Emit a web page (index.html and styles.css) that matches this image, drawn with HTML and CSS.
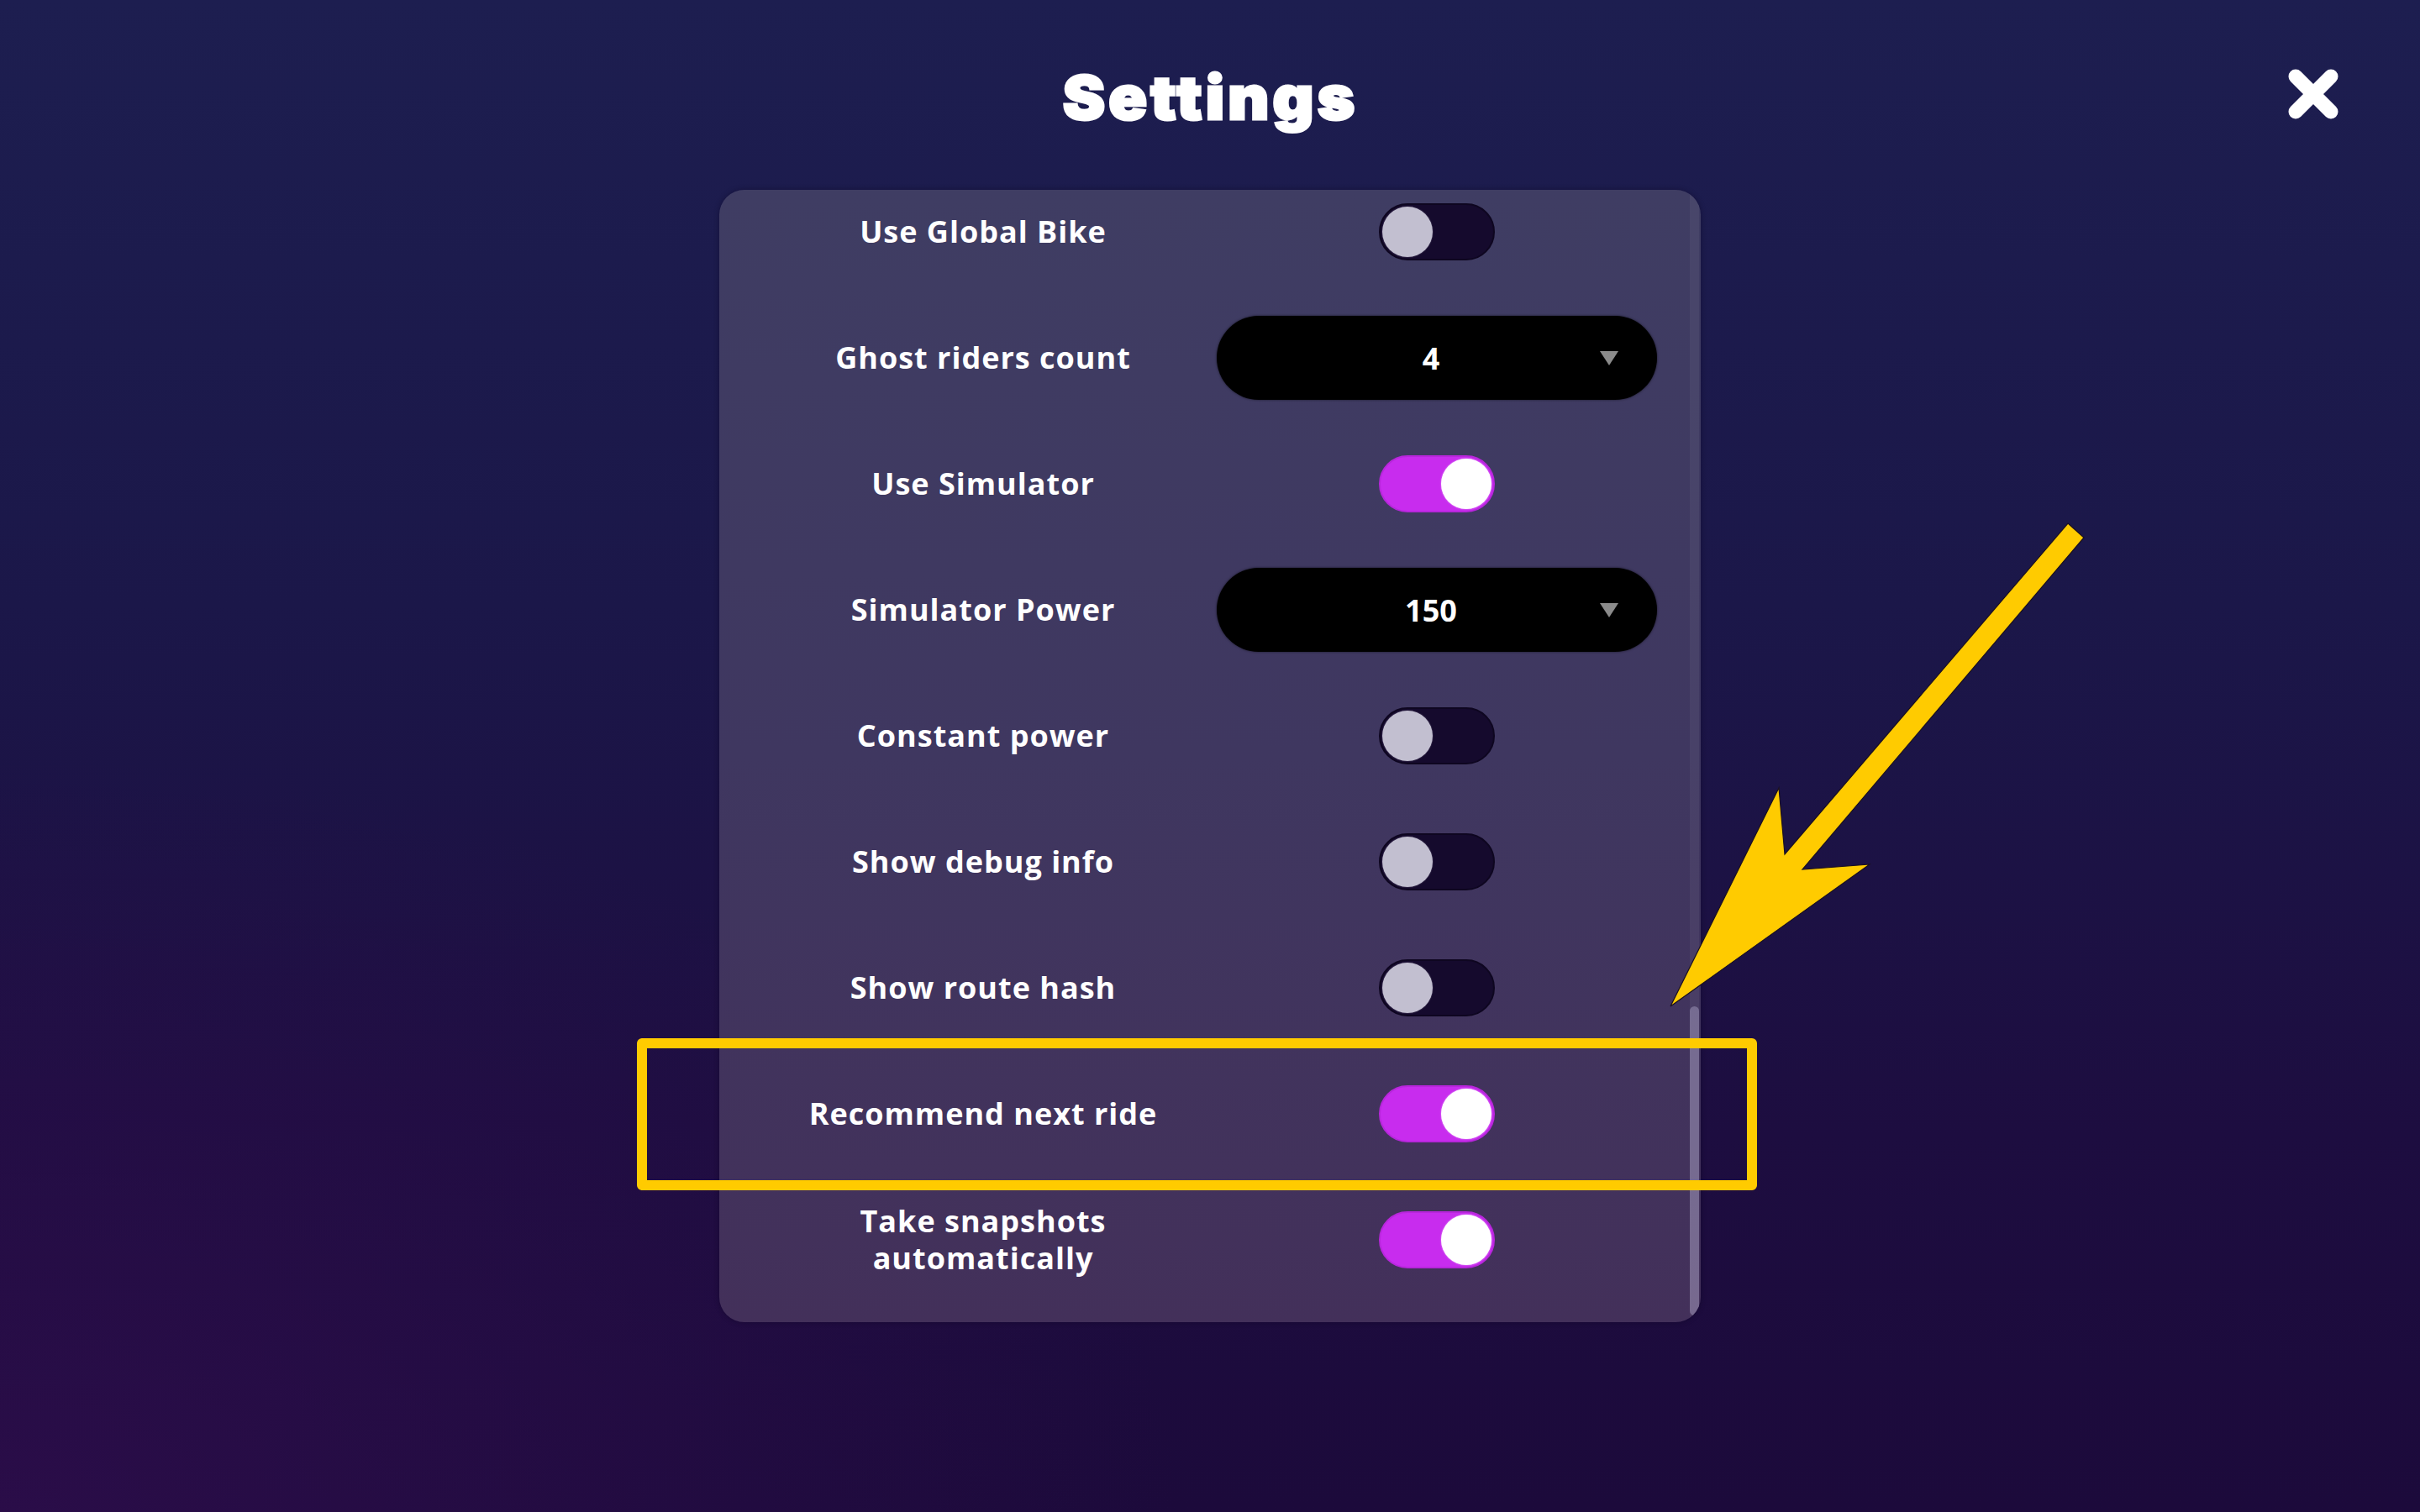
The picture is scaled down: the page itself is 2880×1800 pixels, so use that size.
FILE: index.html
```html
<!DOCTYPE html>
<html lang="en">
<head>
  <meta charset="UTF-8">
  <meta name="viewport" content="width=device-width, initial-scale=1.0">
  <title>Settings</title>
  <link rel="stylesheet" href="styles.css">
</head>
<body>
  <header class="top">
    <div></div>
    <h1 class="title">Settings</h1>
    <button class="close" aria-label="Close">
      <svg width="60" height="60" viewBox="0 0 60 60">
        <path d="M9 9 L51 51 M51 9 L9 51" stroke="#fff" stroke-width="17" stroke-linecap="round" fill="none"/>
      </svg>
    </button>
  </header>

  <div class="panel">
    <div class="list">
      <div class="row">
        <span class="label">Use Global Bike</span>
        <div class="control"><span class="toggle"><span class="knob"></span></span></div>
      </div>
      <div class="row">
        <span class="label">Ghost riders count</span>
        <div class="control"><div class="select"><span></span><span class="value">4</span><span class="caret"></span></div></div>
      </div>
      <div class="row">
        <span class="label">Use Simulator</span>
        <div class="control"><span class="toggle on"><span class="knob"></span></span></div>
      </div>
      <div class="row">
        <span class="label">Simulator Power</span>
        <div class="control"><div class="select"><span></span><span class="value">150</span><span class="caret"></span></div></div>
      </div>
      <div class="row">
        <span class="label">Constant power</span>
        <div class="control"><span class="toggle"><span class="knob"></span></span></div>
      </div>
      <div class="row">
        <span class="label">Show debug info</span>
        <div class="control"><span class="toggle"><span class="knob"></span></span></div>
      </div>
      <div class="row">
        <span class="label">Show route hash</span>
        <div class="control"><span class="toggle"><span class="knob"></span></span></div>
      </div>
      <div class="row">
        <span class="label">Recommend next ride</span>
        <div class="control"><span class="toggle on"><span class="knob"></span></span></div>
      </div>
      <div class="row">
        <span class="label">Take snapshots automatically</span>
        <div class="control"><span class="toggle on"><span class="knob"></span></span></div>
      </div>
    </div>
    <div class="scrollbar"><div class="thumb"></div></div>
  </div>

  <!-- annotation overlay -->
  <svg class="markup" width="2880" height="1800" viewBox="0 0 2880 1800">
    <rect x="764" y="1242" width="1321" height="169" fill="none" stroke="#ffcb00" stroke-width="12" stroke-linejoin="round"/>
    <polygon points="2461,623 2480,640 2145,1035 2225,1029 1988,1198 2117,938 2124,1017" fill="#ffcb00" stroke="#1a1020" stroke-width="1.2" stroke-linejoin="miter"/>
  </svg>
</body>
</html>
```

FILE: styles.css
```css
body {
  margin: 0;
  width: 2880px;
  height: 1800px;
  overflow: hidden;
  position: relative;
  font-family: "Open Sans", "Liberation Sans", sans-serif;
  color: #fff;
  background:
    radial-gradient(ellipse 1400px 900px at 0% 100%, rgba(48, 14, 78, 0.7) 0%, rgba(48, 14, 78, 0) 100%),
    linear-gradient(180deg, #1d1e50 0%, #1b1749 40%, #1d0d40 75%, #1c0a3b 100%);
}
.top {
  height: 226px;
  box-sizing: border-box;
  padding-top: 82px;
  display: grid;
  grid-template-columns: 1fr auto 1fr;
  align-items: start;
}
.title {
  margin: 4px 0 0;
  font-family: Inter, "Open Sans", sans-serif;
  font-weight: 900;
  font-size: 72px;
  line-height: 60px;
  letter-spacing: 4px;
  -webkit-text-stroke: 3px #fff;
  transform: scaleX(1.05);
}
.close {
  justify-self: end;
  margin-right: 97px;
  padding: 0;
  border: none;
  background: none;
  width: 60px;
  height: 60px;
}
.close svg {
  display: block;
}
.panel {
  width: 1168px;
  height: 1348px;
  margin: 0 auto;
  border-radius: 30px;
  overflow: hidden;
  display: flex;
  background: linear-gradient(180deg, #3f3d63 0%, #3f3760 50%, #43305a 100%);
  box-shadow: 0 0 6px rgba(10, 5, 30, 0.4);
}
.list {
  flex: 1;
  padding-left: 36px;
  display: flex;
  flex-direction: column;
  gap: 50px;
}
.row {
  height: 100px;
  display: grid;
  grid-template-columns: 556px 524px;
  align-items: center;
}
.label {
  justify-self: center;
  max-width: 460px;
  text-align: center;
  font-weight: 700;
  font-size: 36px;
  line-height: 44px;
  letter-spacing: 1px;
}
.control {
  display: flex;
  justify-content: center;
}
.toggle {
  width: 138px;
  height: 68px;
  box-sizing: border-box;
  border-radius: 34px;
  background: #150a2d;
  border: 2px solid #0e0620;
  display: flex;
  align-items: center;
  padding: 0 2px;
}
.knob {
  width: 60px;
  height: 60px;
  border-radius: 50%;
  background: #c2bfd0;
  box-shadow: 0 0 0 1px #2a1f40;
}
.toggle.on {
  background: #c82cee;
  border-color: #b826dc;
  justify-content: flex-end;
}
.toggle.on .knob {
  background: #fff;
  box-shadow: 0 0 2px #e9a8ff;
}
.select {
  width: 524px;
  height: 100px;
  box-sizing: border-box;
  border-radius: 50px;
  background: #000;
  box-shadow: 0 0 3px rgba(0, 0, 0, 0.6);
  padding: 0 46px 0 32px;
  display: grid;
  grid-template-columns: 1fr auto 1fr;
  align-items: center;
}
.value {
  font-weight: 700;
  font-size: 36px;
}
.caret {
  justify-self: end;
  width: 0;
  height: 0;
  border-left: 11px solid transparent;
  border-right: 11px solid transparent;
  border-top: 17px solid #8b8b8b;
}
.scrollbar {
  width: 11px;
  margin-right: 2px;
  background: rgba(255, 255, 255, 0.05);
  display: flex;
  flex-direction: column;
  justify-content: flex-end;
}
.thumb {
  height: 368px;
  margin-bottom: 8px;
  border-radius: 6px;
  background: rgba(200, 195, 230, 0.35);
}
.markup {
  position: absolute;
  left: 0;
  top: 0;
  pointer-events: none;
}
```
